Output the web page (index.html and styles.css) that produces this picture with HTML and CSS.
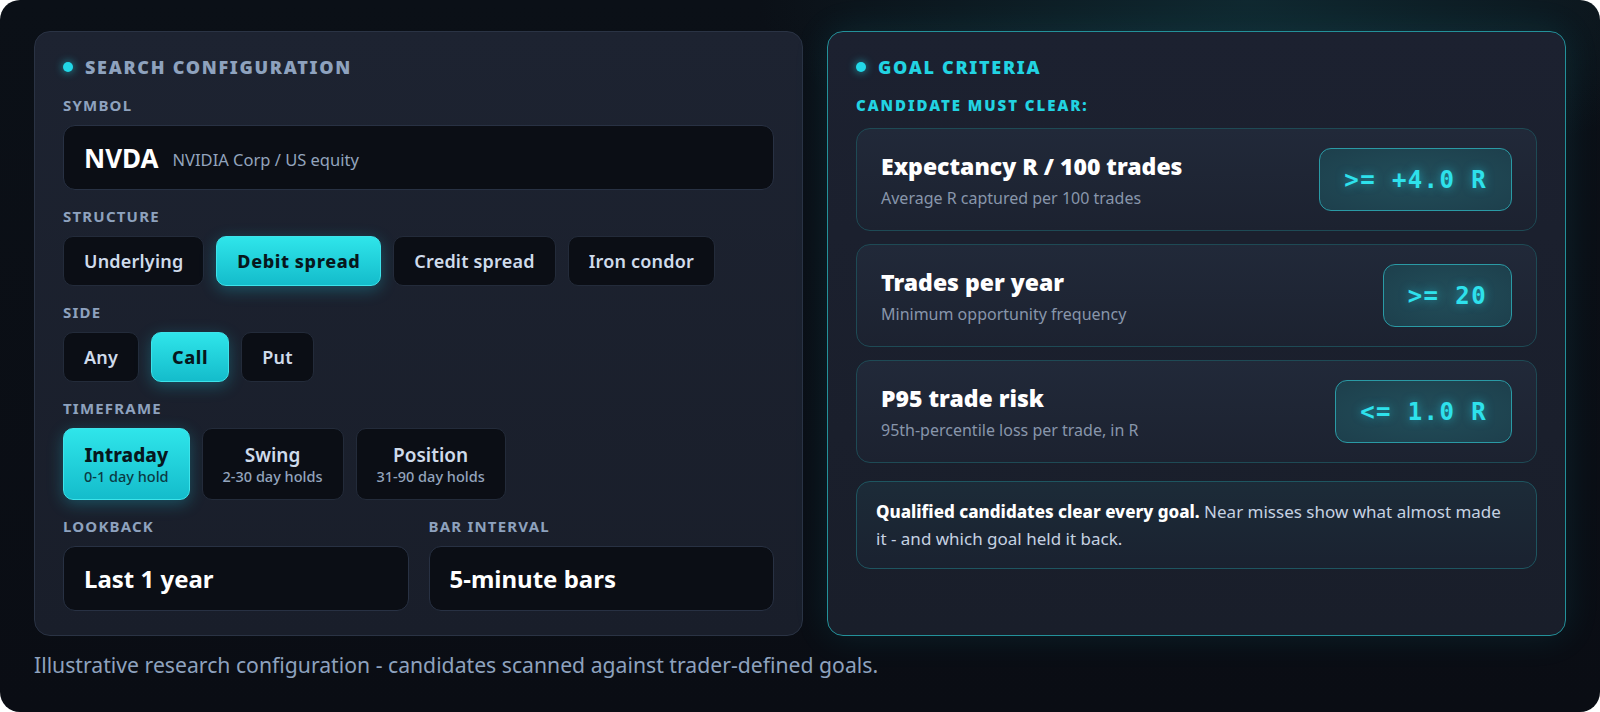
FILE: index.html
```html
<!DOCTYPE html>
<html lang="en">
<head>
<meta charset="utf-8">
<title>Search configuration</title>
<link rel="stylesheet" href="styles.css">
</head>
<body>
<div class="frame">
  <div class="panels">
    <section class="panel config">
      <h2 class="panel-title"><span class="dot"></span>SEARCH CONFIGURATION</h2>
      <div class="field">
        <div class="label">SYMBOL</div>
        <div class="input symbol"><span class="ticker">NVDA</span><span class="ticker-sub">NVIDIA Corp / US equity</span></div>
      </div>
      <div class="field">
        <div class="label">STRUCTURE</div>
        <div class="chips">
          <button class="chip">Underlying</button>
          <button class="chip active">Debit spread</button>
          <button class="chip">Credit spread</button>
          <button class="chip">Iron condor</button>
        </div>
      </div>
      <div class="field">
        <div class="label">SIDE</div>
        <div class="chips">
          <button class="chip">Any</button>
          <button class="chip active">Call</button>
          <button class="chip">Put</button>
        </div>
      </div>
      <div class="field">
        <div class="label">TIMEFRAME</div>
        <div class="chips">
          <button class="chip tall active"><span class="chip-title">Intraday</span><span class="chip-sub">0-1 day hold</span></button>
          <button class="chip tall"><span class="chip-title">Swing</span><span class="chip-sub">2-30 day holds</span></button>
          <button class="chip tall"><span class="chip-title">Position</span><span class="chip-sub">31-90 day holds</span></button>
        </div>
      </div>
      <div class="row2">
        <div class="field">
          <div class="label">LOOKBACK</div>
          <div class="input value">Last 1 year</div>
        </div>
        <div class="field">
          <div class="label">BAR INTERVAL</div>
          <div class="input value">5-minute bars</div>
        </div>
      </div>
    </section>

    <section class="panel goals">
      <h2 class="panel-title cyan"><span class="dot"></span>GOAL CRITERIA</h2>
      <div class="label cyan">CANDIDATE MUST CLEAR:</div>
      <div class="criteria">
        <div class="criterion">
          <div class="crit-text">
            <div class="crit-title">Expectancy R / 100 trades</div>
            <div class="crit-sub">Average R captured per 100 trades</div>
          </div>
          <div class="badge">&gt;= +4.0 R</div>
        </div>
        <div class="criterion">
          <div class="crit-text">
            <div class="crit-title">Trades per year</div>
            <div class="crit-sub">Minimum opportunity frequency</div>
          </div>
          <div class="badge">&gt;= 20</div>
        </div>
        <div class="criterion">
          <div class="crit-text">
            <div class="crit-title">P95 trade risk</div>
            <div class="crit-sub">95th-percentile loss per trade, in R</div>
          </div>
          <div class="badge">&lt;= 1.0 R</div>
        </div>
      </div>
      <p class="note"><strong>Qualified candidates clear every goal.</strong> Near misses show what almost made it - and which goal held it back.</p>
    </section>
  </div>
  <p class="footer">Illustrative research configuration - candidates scanned against trader-defined goals.</p>
</div>
</body>
</html>
```

FILE: styles.css
```css
* { box-sizing: border-box; }

html, body {
  margin: 0;
  padding: 0;
  background: #ffffff;
}

body {
  font-family: "Noto Sans", "Open Sans", sans-serif;
  width: 1600px;
  height: 712px;
  overflow: hidden;
}

.frame {
  width: 1600px;
  height: 712px;
  border-radius: 20px;
  padding: 31px 34px 0 34px;
  background:
    radial-gradient(ellipse 700px 260px at 78% 0%, rgba(22, 70, 78, 0.45), rgba(10, 14, 20, 0) 70%),
    linear-gradient(180deg, #0b1017 0%, #0a0d14 100%);
  overflow: hidden;
}

.panels {
  display: grid;
  grid-template-columns: 769px 739px;
  gap: 24px;
  height: 603px;
}

.panel {
  border-radius: 16px;
  padding: 24px 28px;
  display: flex;
  flex-direction: column;
}

.config {
  background: linear-gradient(180deg, #1d2331 0%, #191e2a 100%);
  border: 1px solid #2a3344;
}

.goals {
  background: linear-gradient(180deg, #1c2130 0%, #191e2a 100%);
  border: 1px solid #23919a;
  box-shadow: 0 0 36px rgba(34, 211, 238, 0.10);
}

.panel-title {
  margin: 0 0 19px 0;
  font-size: 18px;
  line-height: 22px;
  font-weight: 900;
  letter-spacing: 0.095em;
  color: #8ea2be;
  display: flex;
  align-items: center;
}

.panel-title.cyan { color: #22d3e2; }

.dot {
  width: 10px;
  height: 10px;
  border-radius: 50%;
  background: #22d8e8;
  box-shadow: 0 0 8px rgba(34, 216, 232, 0.7);
  margin-right: 12px;
  flex: none;
}

.field {
  display: flex;
  flex-direction: column;
  margin-bottom: 18px;
}

.label {
  font-size: 15px;
  line-height: 17px;
  font-weight: 700;
  letter-spacing: 0.08em;
  color: #8ea2be;
  margin-bottom: 11px;
}

.label.cyan {
  color: #22d3e2;
  font-weight: 900;
  letter-spacing: 0.13em;
  margin-bottom: 14px;
}

.input {
  height: 65px;
  border-radius: 12px;
  background: #0b0e15;
  border: 1px solid #283143;
  display: flex;
  align-items: center;
  padding: 0 20px;
}

.ticker {
  font-size: 26px;
  font-weight: 700;
  color: #ffffff;
  margin-right: 14px;
}

.ticker-sub {
  font-size: 16.5px;
  color: #93a4bd;
  padding-top: 3px;
}

.value {
  font-size: 24px;
  font-weight: 700;
  color: #ffffff;
}

.chips {
  display: flex;
  gap: 12px;
}

.chip {
  font-family: inherit;
  height: 50px;
  padding: 0 20px;
  border-radius: 10px;
  background: #0b0e15;
  border: 1px solid #232b3a;
  color: #cfdbeb;
  font-size: 18px;
  font-weight: 600;
  letter-spacing: 0.2px;
  cursor: pointer;
}

.chip.active {
  background: linear-gradient(180deg, #2fe5ea 0%, #14bccb 100%);
  border-color: #3de3ea;
  color: #07171d;
  font-weight: 800;
  letter-spacing: 0.6px;
  box-shadow: 0 4px 16px rgba(34, 211, 238, 0.28);
}

.chip.tall {
  height: 72px;
  display: flex;
  flex-direction: column;
  align-items: center;
  justify-content: center;
  letter-spacing: 0;
}

.chip-title {
  font-size: 19px;
  line-height: 24px;
}

.chip-sub {
  font-size: 14.5px;
  line-height: 19px;
  font-weight: 500;
  color: #93a4bd;
}

.chip.active .chip-title { font-weight: 800; }
.chip.active .chip-sub { color: #0b3a44; }

.row2 {
  display: grid;
  grid-template-columns: 1fr 1fr;
  gap: 20px;
}

.row2 .field { margin-bottom: 0; }

.criteria {
  display: flex;
  flex-direction: column;
  gap: 13px;
}

.criterion {
  height: 103px;
  border-radius: 14px;
  border: 1px solid #1e4a55;
  background: linear-gradient(180deg, #212939 0%, #1c2230 100%);
  display: flex;
  align-items: center;
  justify-content: space-between;
  padding: 0 24px;
}

.crit-title {
  font-size: 23px;
  line-height: 28px;
  font-weight: 900;
  color: #ffffff;
}

.crit-sub {
  font-size: 16px;
  line-height: 20px;
  color: #8896ab;
  margin-top: 8px;
}

.badge {
  height: 63px;
  padding: 0 24px;
  display: flex;
  align-items: center;
  border-radius: 12px;
  border: 1px solid #2a9aa5;
  background: radial-gradient(ellipse at center, #224e5a 0%, #1d3f4c 100%);
  font-family: "DejaVu Sans Mono", "Liberation Mono", monospace;
  font-size: 24px;
  font-weight: 700;
  letter-spacing: 1.4px;
  color: #2ee1ec;
  text-shadow: 0 0 10px rgba(34, 211, 238, 0.55);
  white-space: pre;
}

.note {
  margin: 18px 0 0 0;
  border-radius: 14px;
  border: 1px solid #1e5560;
  background: linear-gradient(180deg, #1c2b38 0%, #1a2230 100%);
  padding: 16px 30px 16px 19px;
  font-size: 17px;
  line-height: 27px;
  color: #c6d2e2;
}

.note strong {
  color: #ffffff;
  font-weight: 800;
}

.footer {
  margin: 18px 0 0 0;
  font-size: 21.2px;
  line-height: 26px;
  color: #8ea2be;
}
```
